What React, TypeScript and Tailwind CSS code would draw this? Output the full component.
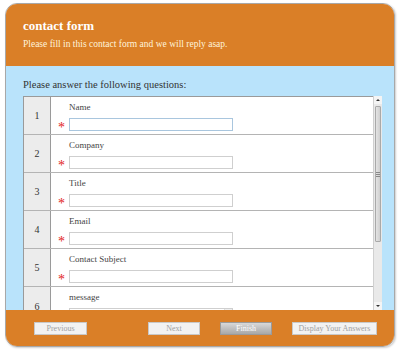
const questions = ["Name", "Company", "Title", "Email", "Contact Subject"];

function NumberCell({ n }: { n: number }) {
  return (
    <div className="flex w-[27px] shrink-0 items-center justify-center border-r border-[#9a9a9a] bg-[#ececec] text-[10px] text-[#333]">
      {n}
    </div>
  );
}

function Star() {
  return (
    <span className="block h-[13px] w-[18px] pl-[7px] pt-[3px] text-[14px] leading-[13px] text-[#e2231a]">
      *
    </span>
  );
}

function Row({ n, label, focused }: { n: number; label: string; focused?: boolean }) {
  return (
    <div className="flex h-[38px] shrink-0 border-b border-[#b4b4b4]">
      <NumberCell n={n} />
      <div className="flex-1 bg-white pt-[4px]">
        <div className="pl-[18px] text-[9px] leading-[12px] text-[#444]">{label}</div>
        <div className="mt-[5px] flex items-start">
          <Star />
          <div
            className={
              "h-[13px] w-[164px] border bg-white " +
              (focused ? "border-[#a9c6de]" : "border-[#cfcfcf]")
            }
          />
        </div>
      </div>
    </div>
  );
}

function Button({ label, primary }: { label: string; primary?: boolean }) {
  return (
    <div
      className={
        "flex h-[13px] items-center justify-center whitespace-nowrap border text-[8px] leading-none " +
        (primary
          ? "border-[#9a9a9a] bg-gradient-to-b from-[#d8d8d8] to-[#a8a8a8] text-white"
          : "border-[#c8c8c8] bg-[#f2f2f2] text-[#a0a0a0]")
      }
    >
      {label}
    </div>
  );
}

export default function App() {
  return (
    <div className="h-[354px] w-[400px] bg-white pl-[5px] pt-[3px] font-[family-name:Liberation_Serif,serif]">
      <div className="flex h-[344px] w-[390px] flex-col overflow-hidden rounded-[12px] border border-[#a8a8a8] shadow-[1px_1px_2px_rgba(0,0,0,0.2)]">
        <div className="h-[62px] shrink-0 bg-[#da7f27] pl-[17px] pt-[14px]">
          <div className="text-[13px] font-bold leading-[16px] text-white">contact form</div>
          <div className="mt-[4px] text-[9.5px] leading-[12px] text-[#fff4dc]">
            Please fill in this contact form and we will reply asap.
          </div>
        </div>

        <div className="flex h-[244px] shrink-0 flex-col bg-[#b9e3fb] pl-[17px]">
          <div className="pt-[12px] text-[10.5px] leading-[13px] text-[#333]">
            Please answer the following questions:
          </div>
          <div className="mt-[5px] flex flex-1 overflow-hidden">
            <div className="flex w-[350px] flex-col overflow-hidden border-l border-t border-[#9a9a9a]">
              {questions.map((q, i) => (
                <Row key={q} n={i + 1} label={q} focused={i === 0} />
              ))}
              <div className="flex h-[38px] shrink-0">
                <NumberCell n={6} />
                <div className="flex-1 bg-white pt-[4px]">
                  <div className="pl-[18px] text-[9px] leading-[12px] text-[#444]">message</div>
                  <div className="mt-[5px] flex items-start">
                    <Star />
                    <div className="flex h-[20px] w-[164px] justify-end border border-[#cfcfcf] bg-white">
                      <div className="w-[8px] border-l border-[#ddd] bg-[#eee]" />
                    </div>
                  </div>
                </div>
              </div>
            </div>
            <div className="flex w-[9px] flex-col border-l border-[#d0d0d0] bg-[#e9e9e9]">
              <div className="flex h-[8px] items-center justify-center bg-[#f4f4f4]">
                <div className="h-0 w-0 border-x-[2px] border-b-[2px] border-x-transparent border-b-[#333]" />
              </div>
              <div className="mx-[1px] mt-[2px] flex h-[136px] items-center justify-center rounded-[1px] border border-[#a9a9a9] bg-gradient-to-r from-[#e4e4e4] to-[#cfcfcf]">
                <div className="flex flex-col gap-[1px]">
                  <div className="h-px w-[4px] bg-[#888]" />
                  <div className="h-px w-[4px] bg-[#888]" />
                  <div className="h-px w-[4px] bg-[#888]" />
                </div>
              </div>
              <div className="flex-1" />
              <div className="flex h-[8px] items-center justify-center bg-[#f4f4f4]">
                <div className="h-0 w-0 border-x-[2px] border-t-[2px] border-x-transparent border-t-[#333]" />
              </div>
            </div>
            <div className="flex-1" />
          </div>
        </div>

        <div className="flex flex-1 items-start bg-[#da7f27] pt-[12px]">
          <div className="ml-[28px] w-[53px]">
            <Button label="Previous" />
          </div>
          <div className="ml-[61px] w-[52px]">
            <Button label="Next" />
          </div>
          <div className="ml-[20px] w-[52px]">
            <Button label="Finish" primary />
          </div>
          <div className="ml-[20px] w-[85px]">
            <Button label="Display Your Answers" />
          </div>
        </div>
      </div>
    </div>
  );
}
